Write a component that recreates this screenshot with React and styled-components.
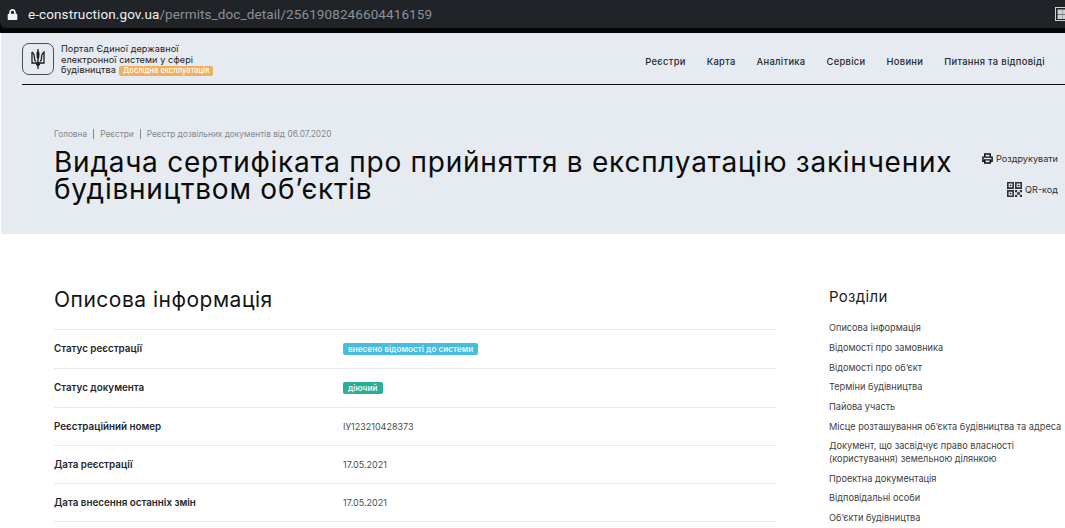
import styled, { createGlobalStyle } from "styled-components";
import { FaLock } from "react-icons/fa";

const Global = createGlobalStyle`
  html, body {
    margin: 0;
    padding: 0;
    height: 528px;
    overflow: hidden;
    background: #fff;
    font-family: "Inter", "Liberation Sans", sans-serif;
    color: #1c1c1c;
  }
`;

const BrowserChrome = styled.div`
  height: 33px;
  background: #050506;
`;

const AddressBar = styled.div`
  height: 28px;
  background: #202328;
  border-bottom-left-radius: 6px;
  display: flex;
  align-items: center;
  padding-left: 7px;
  font-family: "Roboto", sans-serif;
  font-size: 13.5px;
  letter-spacing: 0.1px;
  color: #8d9096;
`;

const LockIcon = styled(FaLock)`
  width: 11px;
  height: 11px;
  color: #f2f2f2;
  margin-right: 10px;
`;

const Host = styled.span`
  color: #eef0f2;
`;

const ExtensionIcon = styled.svg`
  width: 12px;
  height: 14px;
  margin-left: auto;
  margin-right: -2px;
`;

const Hero = styled.section`
  margin-left: 1px;
  height: 201px;
  background: #e5ebf1;
`;

const Header = styled.header`
  height: 51px;
  margin-left: 21px;
  border-bottom: 1px solid #111;
  display: flex;
  align-items: center;
  justify-content: space-between;
  padding-right: 20px;
`;

const Brand = styled.div`
  display: flex;
  align-items: center;
  gap: 7px;
  padding-top: 1px;
`;

const LogoBox = styled.div`
  width: 30px;
  height: 30px;
  border: 1px solid #4a4d52;
  border-radius: 7px;
  display: flex;
  align-items: center;
  justify-content: center;
`;

const BrandText = styled.div`
  font-size: 9.1px;
  line-height: 10.5px;
  color: #222;
  letter-spacing: 0.1px;
  padding-top: 2px;
`;

const TestBadge = styled.span`
  display: inline-block;
  margin-left: 3px;
  padding: 0 4px;
  height: 10px;
  line-height: 10px;
  font-size: 7.4px;
  font-weight: 500;
  color: #fff;
  background: #eeb05c;
  border-radius: 2px;
  white-space: nowrap;
`;

const Nav = styled.nav`
  display: flex;
  gap: 21px;
  padding-top: 5px;
  font-size: 9.4px;
  font-weight: 500;
  letter-spacing: 0.3px;
  color: #26282c;
`;

const HeroBody = styled.div`
  display: flex;
  justify-content: space-between;
  padding: 44px 7px 0 53px;
`;

const Crumbs = styled.div`
  display: flex;
  align-items: center;
  gap: 6px;
  font-size: 8.3px;
  color: #85888c;
`;

const CrumbSep = styled.i`
  width: 1px;
  height: 10px;
  background: #85888c;
`;

const Title = styled.h1`
  margin: 10px 0 0;
  font-size: 28px;
  font-weight: 400;
  line-height: 27px;
  letter-spacing: 0.75px;
  color: #0b0b0b;
`;

const Actions = styled.div`
  display: flex;
  flex-direction: column;
  align-items: flex-end;
  gap: 18px;
  padding-top: 24px;
`;

const Action = styled.a`
  display: flex;
  align-items: center;
  gap: 3px;
  font-size: 9.1px;
  color: #2b2d30;
`;

const Main = styled.main`
  display: flex;
  padding-left: 54px;
`;

const Info = styled.div`
  width: 722px;
`;

const SectionTitle = styled.h2`
  margin: 54px 0 0;
  height: 41px;
  font-size: 21px;
  line-height: 23px;
  font-weight: 400;
  letter-spacing: 0.5px;
  color: #151515;
`;

const Row = styled.div`
  display: grid;
  grid-template-columns: 289px 1fr;
  align-items: center;
  height: ${({ $tall }) => ($tall ? "38px" : "37px")};
  border-top: 1px solid #e5ebf1;
  font-size: 9px;
  &:last-child {
    border-bottom: 1px solid #e5ebf1;
  }
`;

const RowLabel = styled.div`
  font-size: 9.8px;
  font-weight: 600;
  color: #25272a;
  margin-top: -1px;
`;

const RowValue = styled.div`
  color: #4b4d50;
`;

const Pill = styled.span`
  display: block;
  width: fit-content;
  padding: 0 5px;
  height: 12px;
  line-height: 12px;
  font-size: 8.2px;
  font-weight: 600;
  color: #e8f8fb;
  background: ${({ $color }) => $color};
  border-radius: 2px;
`;

const Aside = styled.aside`
  margin-left: 53px;
  flex: 1;
  padding-top: 54px;
`;

const AsideTitle = styled.h3`
  margin: 0 0 16.2px;
  font-size: 15px;
  line-height: 18px;
  font-weight: 400;
  letter-spacing: 0.3px;
  color: #222;
`;

const AsideList = styled.ul`
  list-style: none;
  margin: 0;
  padding: 0;
  display: flex;
  flex-direction: column;
  gap: 7.2px;
`;

const AsideItem = styled.li`
  font-size: 9.2px;
  line-height: 12.5px;
  color: #3f4144;
  white-space: pre-line;
`;

const sections = [
  "Описова інформація",
  "Відомості про замовника",
  "Відомості про об’єкт",
  "Терміни будівництва",
  "Пайова участь",
  "Місце розташування об’єкта будівництва та адреса",
  "Документ, що засвідчує право власності\n(користування) земельною ділянкою",
  "Проектна документація",
  "Відповідальні особи",
  "Об’єкти будівництва",
];

const navItems = ["Реєстри", "Карта", "Аналітика", "Сервіси", "Новини", "Питання та відповіді"];

const Trident = () => (
  <svg width="14" height="22" viewBox="0 0 14 22" fill="none" stroke="#1c1c1c" strokeWidth="1.3">
    <path d="M7 1v20M7 3c-1.300 2-1.100 5 0 8 1.100-3 1.300-6 0-8Z" />
    <path d="M1 4v11h3.500c1 0 2 1 2.500 3 .5-2 1.500-3 2.500-3H13V4c-2 1.500-2.500 4-2.500 6 0 1.500-.5 3-1.500 3" />
    <path d="M1 4c2 1.500 2.500 4 2.500 6 0 1.500.5 3 1.500 3M5 16.500h4M5.500 14.500h3" />
  </svg>
);

const PrintIcon = () => (
  <svg width="11" height="11" viewBox="0 0 12 12" fill="none" stroke="#111" strokeWidth="1.600">
    <path d="M3 4V1h6v3M3 9H1V4.500h10V9H9" />
    <path d="M3 7.500h6V11H3z" />
  </svg>
);

const QrIcon = () => (
  <svg width="15" height="15" viewBox="0 0 14 14" fill="#2f3134">
    <path fillRule="evenodd" d="M0 0h6.500v6.500H0zM1.500 1.500v3.500h3.500V1.500zM7.500 0H14v6.500H7.500zM9 1.500v3.500h3.500V1.500zM0 7.500h6.500V14H0zM1.500 9v3.500h3.500V9z" />
    <path d="M2.500 2.500H4V4H2.500zM10 2.500h1.500V4H10zM2.500 10H4v1.500H2.500zM7.500 7.500h2v2h-2zM12 7.500h2v2h-2zM9.500 9.500h2.500V12H9.500zM7.500 12h2v2h-2zM12 12h2v2h-2z" />
  </svg>
);

export default function App() {
  return (
    <>
      <Global />
      <BrowserChrome>
        <AddressBar>
          <LockIcon />
          <Host>e-construction.gov.ua</Host>/permits_doc_detail/2561908246604416159
          <ExtensionIcon viewBox="0 0 12 14" fill="none" stroke="#cfd0d2">
            <rect x="0.500" y="0.500" width="14" height="13" />
            <rect x="3" y="3" width="4" height="3.500" fill="#cfd0d2" />
            <rect x="8" y="3" width="4" height="3.500" fill="#cfd0d2" />
            <rect x="3" y="8" width="4" height="3.500" fill="#cfd0d2" />
            <rect x="8" y="8" width="4" height="3.500" fill="#cfd0d2" />
          </ExtensionIcon>
        </AddressBar>
      </BrowserChrome>
      <Hero>
        <Header>
          <Brand>
            <LogoBox>
              <Trident />
            </LogoBox>
            <BrandText>
              Портал Єдиної державної
              <br />
              електронної системи у сфері
              <br />
              будівництва
              <TestBadge>Дослідна експлуатація</TestBadge>
            </BrandText>
          </Brand>
          <Nav>
            {navItems.map((item) => (
              <span key={item}>{item}</span>
            ))}
          </Nav>
        </Header>
        <HeroBody>
          <div>
            <Crumbs>
              Головна <CrumbSep /> Реєстри <CrumbSep /> Реєстр дозвільних документів від 06.07.2020
            </Crumbs>
            <Title>
              Видача сертифіката про прийняття в експлуатацію закінчених
              <br />
              будівництвом об’єктів
            </Title>
          </div>
          <Actions>
            <Action>
              <PrintIcon /> Роздрукувати
            </Action>
            <Action>
              <QrIcon /> QR-код
            </Action>
          </Actions>
        </HeroBody>
      </Hero>
      <Main>
        <Info>
          <SectionTitle>Описова інформація</SectionTitle>
          <Row $tall>
            <RowLabel>Статус реєстрації</RowLabel>
            <RowValue>
              <Pill $color="#45bce0">внесено відомості до системи</Pill>
            </RowValue>
          </Row>
          <Row $tall>
            <RowLabel>Статус документа</RowLabel>
            <RowValue>
              <Pill $color="#2aae94">діючий</Pill>
            </RowValue>
          </Row>
          <Row>
            <RowLabel>Реєстраційний номер</RowLabel>
            <RowValue>ІУ123210428373</RowValue>
          </Row>
          <Row>
            <RowLabel>Дата реєстрації</RowLabel>
            <RowValue>17.05.2021</RowValue>
          </Row>
          <Row>
            <RowLabel>Дата внесення останніх змін</RowLabel>
            <RowValue>17.05.2021</RowValue>
          </Row>
        </Info>
        <Aside>
          <AsideTitle>Розділи</AsideTitle>
          <AsideList>
            {sections.map((s) => (
              <AsideItem key={s}>{s}</AsideItem>
            ))}
          </AsideList>
        </Aside>
      </Main>
    </>
  );
}
